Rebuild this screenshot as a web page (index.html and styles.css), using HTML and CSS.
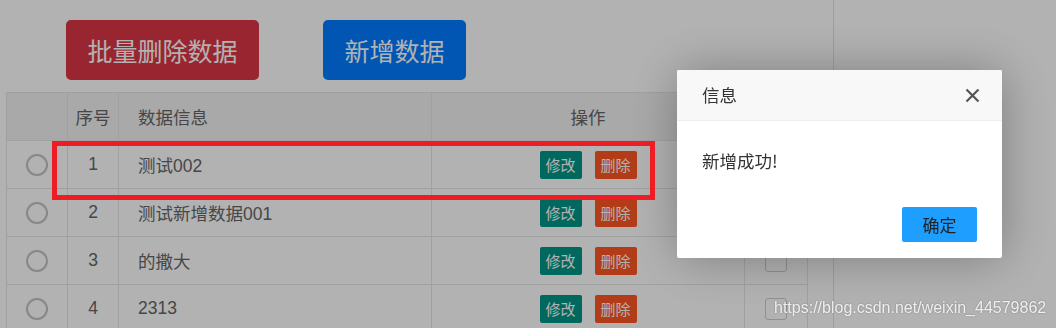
FILE: index.html
```html
<!DOCTYPE html>
<html lang="zh-CN">
<head>
<meta charset="utf-8">
<title>数据管理</title>
<link rel="stylesheet" href="styles.css">
</head>
<body>
<div class="main">
  <div class="toolbar">
    <button class="big-btn danger">批量删除数据</button>
    <button class="big-btn primary">新增数据</button>
  </div>
  <table class="grid">
    <colgroup>
      <col class="c-radio"><col class="c-no"><col class="c-info"><col class="c-op"><col class="c-chk">
    </colgroup>
    <thead>
      <tr><th></th><th class="center">序号</th><th class="left">数据信息</th><th class="center">操作</th><th></th></tr>
    </thead>
    <tbody>
      <tr><td class="center"><span class="radio"></span></td><td class="center">1</td><td class="left">测试002</td><td class="center"><span class="xs edit">修改</span><span class="xs del">删除</span></td><td class="center"><span class="chk"></span></td></tr>
      <tr><td class="center"><span class="radio"></span></td><td class="center">2</td><td class="left">测试新增数据001</td><td class="center"><span class="xs edit">修改</span><span class="xs del">删除</span></td><td class="center"><span class="chk"></span></td></tr>
      <tr><td class="center"><span class="radio"></span></td><td class="center">3</td><td class="left">的撒大</td><td class="center"><span class="xs edit">修改</span><span class="xs del">删除</span></td><td class="center"><span class="chk"></span></td></tr>
      <tr><td class="center"><span class="radio"></span></td><td class="center">4</td><td class="left">2313</td><td class="center"><span class="xs edit">修改</span><span class="xs del">删除</span></td><td class="center"><span class="chk"></span></td></tr>
    </tbody>
  </table>
</div>
<div class="shade"></div>
<div class="layer">
  <div class="layer-title">信息
    <svg class="layer-close" width="15" height="15" viewBox="0 0 15 15"><path d="M1.5 1.5 L13.5 13.5 M13.5 1.5 L1.5 13.5" stroke="#555" stroke-width="2.2" fill="none"/></svg>
  </div>
  <div class="layer-content">新增成功!</div>
  <div class="layer-btns"><button class="layer-ok">确定</button></div>
</div>
<div class="mark"></div>
<div class="watermark">https://blog.csdn.net/weixin_44579862</div>
</body>
</html>
```
FILE: styles.css
```css
html, body {
  margin: 0;
  padding: 0;
  background: #fff;
  width: 1056px;
  height: 328px;
  overflow: hidden;
  font-family: "Liberation Sans", "Noto Sans CJK SC", sans-serif;
}
.main {
  width: 834px;
  height: 328px;
  border-right: 1px solid #e2e2e2;
  box-sizing: border-box;
  padding: 20px 0 0 6px;
}
.toolbar {
  display: flex;
  gap: 64px;
  padding-left: 60px;
  height: 60px;
}
.big-btn {
  height: 60px;
  border: none;
  border-radius: 5px;
  color: #fff;
  font-family: "Noto Sans CJK SC", sans-serif;
  font-size: 25px;
  padding: 0;
  line-height: 60px;
}
.danger { background: #dc3545; width: 193px; }
.primary { background: #007bff; width: 143px; }
.grid {
  margin-top: 12px;
  border-collapse: collapse;
  table-layout: fixed;
  width: 802px;
  color: #666;
  font-size: 17.5px;
}
.c-radio { width: 61px; }
.c-no { width: 51px; }
.c-info { width: 313px; }
.c-op { width: 313px; }
.c-chk { width: 63px; }
.grid th, .grid td {
  border: 1px solid #e6e6e6;
  height: 47px;
  padding: 0;
  font-weight: normal;
  font-family: "Liberation Sans", "Noto Sans CJK SC", sans-serif;
  vertical-align: middle;
}
.grid th { background: #f2f2f2; }
.center { text-align: center; }
.left { text-align: left; padding-left: 19px !important; }
.radio {
  display: inline-block;
  width: 18px;
  height: 18px;
  border: 2px solid #c2c2c2;
  border-radius: 50%;
  vertical-align: middle;
}
.chk {
  display: inline-block;
  width: 20px;
  height: 20px;
  border: 1px solid #cfcfcf;
  border-radius: 3px;
  vertical-align: middle;
}
.xs {
  display: inline-block;
  height: 28px;
  line-height: 28px;
  width: 42px;
  color: #fff;
  font-size: 15px;
  border-radius: 2px;
  vertical-align: middle;
  font-family: "Noto Sans CJK SC", sans-serif;
}
.edit { background: #009688; }
.del { background: #ff5722; margin-left: 13px; }
.shade {
  position: fixed;
  inset: 0;
  background: rgba(0, 0, 0, 0.3);
}
.layer {
  position: fixed;
  left: 677px;
  top: 70px;
  width: 325px;
  background: #fff;
  border-radius: 2px;
  box-shadow: 1px 1px 50px rgba(0, 0, 0, 0.3);
  font-family: "Noto Sans CJK SC", sans-serif;
  color: #333;
}
.layer-title {
  height: 50px;
  line-height: 50px;
  background: #f8f8f8;
  border-bottom: 1px solid #eee;
  border-radius: 2px 2px 0 0;
  padding-left: 25px;
  font-size: 17.5px;
  position: relative;
}
.layer-close {
  position: absolute;
  right: 22px;
  top: 18px;
}
.layer-content {
  padding: 25px;
  line-height: 30px;
  font-size: 17.5px;
}
.layer-btns {
  display: flex;
  justify-content: flex-end;
  padding: 6px 25px 16px;
}
.layer-ok {
  width: 75px;
  height: 35px;
  border: none;
  border-radius: 2px;
  background: #1e9fff;
  color: #222;
  font-family: "Noto Sans CJK SC", sans-serif;
  font-size: 17px;
  padding: 0;
}
.mark {
  position: fixed;
  left: 52px;
  top: 141px;
  width: 603px;
  height: 59px;
  box-sizing: border-box;
  border: 5px solid #ee1c25;
}
.watermark {
  position: fixed;
  left: 774px;
  top: 298px;
  font-family: "Liberation Sans", sans-serif;
  font-size: 16px;
  line-height: 20px;
  color: rgba(255, 255, 255, 0.85);
  text-shadow: 0 0 2px rgba(0, 0, 0, 0.35);
}
```
